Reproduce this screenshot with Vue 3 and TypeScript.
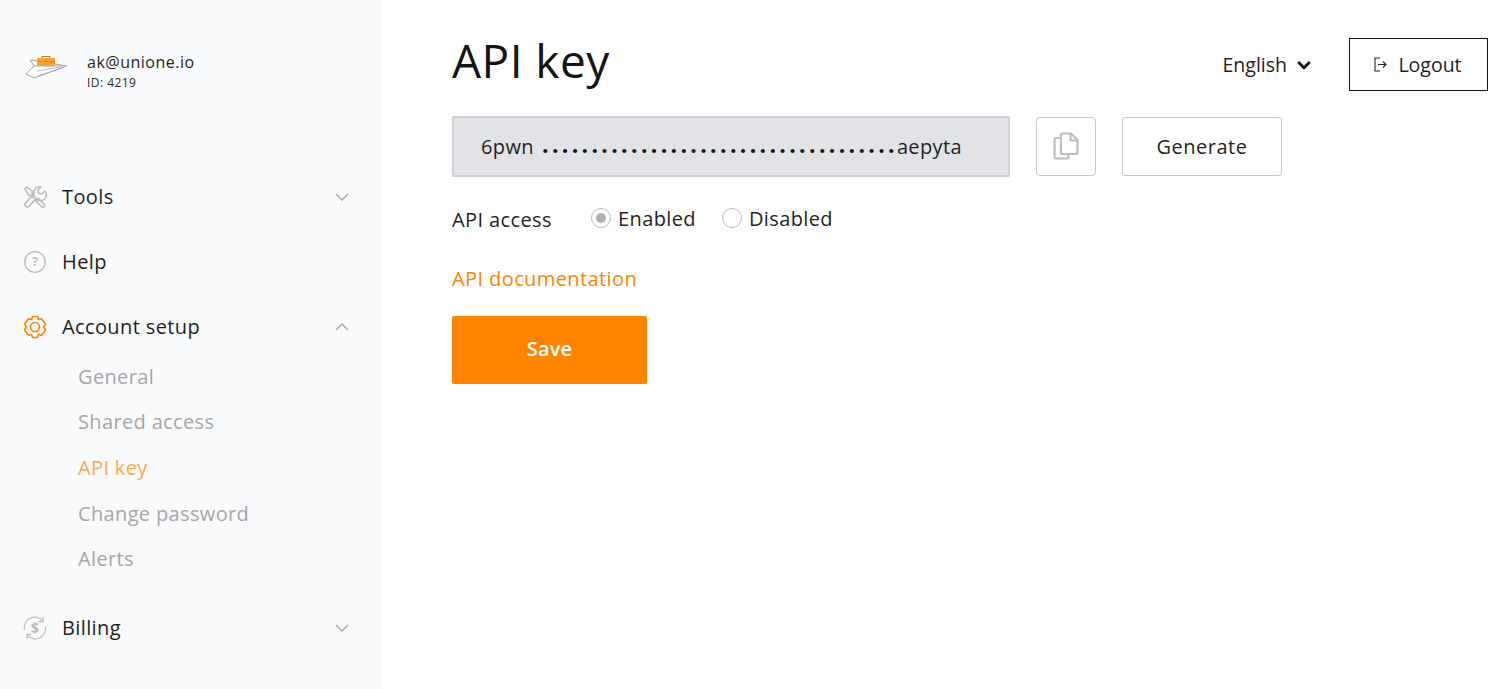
<script setup lang="ts">
interface SubItem { label: string; active?: boolean }
const subItems: SubItem[] = [
  { label: 'General' },
  { label: 'Shared access' },
  { label: 'API key', active: true },
  { label: 'Change password' },
  { label: 'Alerts' },
]
const dots = '.'.repeat(36)
</script>

<template>
  <div class="page">
    <aside class="sidebar">
      <div class="user">
        <svg class="logo" width="44" height="28" viewBox="25 52 44 28" fill="none">
          <path d="M30 60 L67 66 L37 71 L34 66 Z" fill="#fff" stroke="#8d8d8d" stroke-width=".8" stroke-linejoin="round" />
          <path d="M34 66 L67 66 L34 78 L26 74 Z" fill="#fff" stroke="#8d8d8d" stroke-width=".8" stroke-linejoin="round" />
          <path d="M37 71 L67 66 L38 76" stroke="#a5a5a5" stroke-width=".7" />
          <path d="M40 66.500 H67" stroke="#cfd8e8" stroke-width="1.200" />
          <rect x="37" y="58" width="18" height="8" rx="1" fill="#f9a22f" />
          <path d="M42 58 V56.500 H50 V58" stroke="#b9762a" stroke-width="1" />
          <path d="M37 61.500 H55" stroke="#d98a22" stroke-width=".7" />
        </svg>
        <div class="user-text">
          <div class="email">ak@unione.io</div>
          <div class="uid">ID: 4219</div>
        </div>
      </div>

      <nav class="nav">
        <div class="item">
          <svg class="icon" viewBox="0 0 24 24" fill="none" stroke="#b8b8b8" stroke-width="1.500" stroke-linejoin="round" stroke-linecap="round">
            <path d="M2 4 L4 2 L9 6 L9 8.500 L12 11.500 L10.500 13 L7.500 10 L5.500 10 Z" />
            <path d="M15 13 L21.500 19.500 A1.800 1.800 0 0 1 19 22 L12.500 15.500" />
            <path d="M22 6 L18.500 9 L15.500 8 L15 5 L18 2 A5.500 5.500 0 0 0 11 8.500 L2.500 18 A2.500 2.500 0 0 0 6 21.500 L13 13.500 A5.500 5.500 0 0 0 22 6 Z" />
          </svg>
          <span class="label">Tools</span>
          <svg class="chev" viewBox="0 0 14 8" fill="none" stroke="#a9a9a9" stroke-width="1.500"><path d="M1 1 L7 7 L13 1" /></svg>
        </div>
        <div class="item">
          <svg class="icon" viewBox="0 0 24 24" fill="none">
            <circle cx="12" cy="12" r="10.300" stroke="#bdbdbd" stroke-width="1.300" />
            <text x="12" y="16.200" text-anchor="middle" class="qmark">?</text>
          </svg>
          <span class="label">Help</span>
        </div>
        <div class="item">
          <svg class="icon" viewBox="0 0 24 24" fill="none" stroke="#ff8500" stroke-width="1.600" stroke-linejoin="round">
            <path d="M9.500 1.500 H14.500 L15.500 4.500 L18.500 3.800 L22.500 9 L20.700 12 L22.500 15 L18.500 20.200 L15.500 19.500 L14.500 22.500 H9.500 L8.500 19.500 L5.500 20.200 L1.500 15 L3.300 12 L1.500 9 L5.500 3.800 L8.500 4.500 Z" />
            <circle cx="12" cy="12" r="4.500" />
          </svg>
          <span class="label">Account setup</span>
          <svg class="chev" viewBox="0 0 14 8" fill="none" stroke="#a9a9a9" stroke-width="1.500"><path d="M1 7 L7 1 L13 7" /></svg>
        </div>
        <ul class="sub">
          <li v-for="s in subItems" :key="s.label" :class="{ active: s.active }">{{ s.label }}</li>
        </ul>
        <div class="item billing">
          <svg class="icon" viewBox="0 0 24 24" fill="none" stroke="#bdbdbd" stroke-width="1.300">
            <path d="M1.500 13.500 A10.500 10.500 0 0 1 19.500 4.500 M22.500 10.500 A10.500 10.500 0 0 1 4.500 19.500" />
            <path d="M20 1 V5.500 H15.500 M4 23 V18.500 H8.500" />
            <text x="12" y="17" text-anchor="middle" class="dollar">$</text>
          </svg>
          <span class="label">Billing</span>
          <svg class="chev" viewBox="0 0 14 8" fill="none" stroke="#a9a9a9" stroke-width="1.500"><path d="M1 1 L7 7 L13 1" /></svg>
        </div>
      </nav>
    </aside>

    <main class="main">
      <header class="header">
        <h1 class="title">API key</h1>
        <div class="lang">
          <span>English</span>
          <svg width="14" height="10" viewBox="0 0 14 10" fill="none" stroke="#111" stroke-width="2.800"><path d="M1.200 2 L7 7.800 L12.800 2" /></svg>
        </div>
        <button class="logout">
          <svg width="15" height="15" viewBox="0 0 15 15" fill="none" stroke="#222" stroke-width="1.100">
            <path d="M7 1 H2 V14 H7" />
            <path d="M5 7.500 H13 M10 4.500 L13 7.500 L10 10.500" />
          </svg>
          <span>Logout</span>
        </button>
      </header>

      <div class="key-row">
        <div class="key">
          <span class="key-a">6pwn</span>
          <span class="key-dots">{{ dots }}</span>
          <span class="key-b">aepyta</span>
        </div>
        <button class="copy" aria-label="Copy">
          <svg width="26" height="30" viewBox="0 0 26 30" fill="none" stroke="#bdbdbd" stroke-width="2.200" stroke-linejoin="round">
            <path d="M8 6 H3 A1.500 1.500 0 0 0 1.500 7.500 V25 A1.500 1.500 0 0 0 3 26.500 H14 A1.500 1.500 0 0 0 15.500 25 V22" />
            <path d="M8 3 A1.500 1.500 0 0 1 9.500 1.500 H18 L24.500 8 V20.500 A1.500 1.500 0 0 1 23 22 H9.500 A1.500 1.500 0 0 1 8 20.500 Z" />
            <path d="M17.500 1.500 V8.500 H24.500" />
          </svg>
        </button>
        <button class="generate">Generate</button>
      </div>

      <div class="access">
        <span class="access-label">API access</span>
        <label class="radio"><span class="dot on"></span>Enabled</label>
        <label class="radio"><span class="dot"></span>Disabled</label>
      </div>

      <a class="doc">API documentation</a>

      <button class="save">Save</button>
    </main>
  </div>
</template>

<style>
html, body { background: #fff; }
</style>

<style scoped>
.page {
  display: flex;
  height: 689px;
  overflow: hidden;
  font-family: "Open Sans", sans-serif;
  color: #1a1a1a;
}
.sidebar {
  width: 381px;
  flex: none;
  background: #f9fafc;
  box-sizing: border-box;
  padding: 50px 30px 0 23px;
}
.user {
  display: flex;
  align-items: flex-start;
  gap: 18px;
  height: 40px;
  padding-left: 2px;
}
.logo { flex: none; margin-top: 2px; }
.user-text { margin-top: 1px; }
.email { font-size: 16px; line-height: 22px; letter-spacing: .5px; color: #1f1f1f; }
.uid { font-size: 12px; line-height: 16px; letter-spacing: .45px; margin-top: 2px; color: #2a2a2a; }
.nav { margin-top: 85px; }
.item {
  display: flex;
  align-items: center;
  height: 44px;
  margin-bottom: 21px;
}
.icon { width: 24px; height: 24px; flex: none; }
.label {
  margin: 0 0 2px 15px;
  font-size: 20px;
  letter-spacing: .38px;
  flex: 1;
  color: #1f1f1f;
}
.chev { width: 14px; height: 8px; flex: none; margin-right: 2px; }
.qmark { font: 700 12px "Open Sans", sans-serif; fill: #bdbdbd; stroke: none; }
.dollar { font: 700 14px "Open Sans", sans-serif; fill: #bdbdbd; stroke: none; }
.sub {
  list-style: none;
  margin: -16.150px 0 0 0;
  padding: 0 0 0 55px;
}
.sub li {
  height: 45.600px;
  line-height: 45.600px;
  font-size: 20px;
  letter-spacing: .35px;
  color: #a6a6a6;
}
.sub li.active { color: #ffa94d; }
.billing { margin-top: 24.650px; }
.main {
  flex: 1;
  min-width: 0;
  padding: 0 19px 0 71px;
}
.header {
  display: flex;
  align-items: center;
  height: 116px;
}
.title {
  margin: 4px auto 0 0;
  font-size: 46px;
  font-weight: 400;
  letter-spacing: .45px;
  line-height: 60px;
  color: #141414;
}
.lang {
  display: flex;
  align-items: center;
  gap: 10px;
  font-size: 19.500px;
  margin-right: 38px;
  margin-top: 13px;
  color: #1f1f1f;
}
.logout {
  display: flex;
  align-items: center;
  justify-content: center;
  gap: 10px;
  width: 139px;
  height: 53px;
  margin-top: 13px;
  background: #fff;
  border: 1px solid #111;
  font: 400 19.500px "Open Sans", sans-serif;
  color: #1f1f1f;
  padding: 0 2px 0 0;
}
.key-row { display: flex; align-items: center; height: 61px; }
.key {
  width: 558px;
  height: 61px;
  box-sizing: border-box;
  background: #e1e3e7;
  border: 2px solid #cdcfd2;
  border-radius: 2px;
  display: flex;
  align-items: center;
  padding: 0 46px 0 27px;
  font-size: 20px;
  letter-spacing: .38px;
  color: #1f1f1f;
  white-space: nowrap;
}
.key-a { flex: none; width: 54px; }
.key-dots {
  flex: none;
  margin: 0 -3.300px 6px 7px;
  font-size: 23px;
  letter-spacing: 3.330px;
  font-weight: 700;
  color: #111;
}
.key-b { flex: 1; min-width: 0; display: flex; justify-content: flex-end; }
.copy {
  width: 60px;
  height: 59px;
  margin-left: 26px;
  background: #fff;
  border: 1px solid #c8c8c8;
  border-radius: 4px;
  display: flex;
  align-items: center;
  justify-content: center;
  padding: 0;
}
.generate {
  width: 160px;
  height: 59px;
  margin-left: 26px;
  background: #fff;
  border: 1px solid #c8c8c8;
  border-radius: 3px;
  font: 400 20px "Open Sans", sans-serif;
  letter-spacing: .5px;
  color: #1f1f1f;
  padding: 0;
}
.access {
  display: flex;
  align-items: center;
  margin-top: 26px;
  height: 30px;
  font-size: 20px;
  letter-spacing: .38px;
  color: #1f1f1f;
}
.access-label { width: 139px; margin-top: 2px; }
.radio { display: flex; align-items: center; gap: 7px; margin-right: 26px; }
.dot {
  width: 20px;
  height: 20px;
  box-sizing: border-box;
  border-radius: 50%;
  border: 1px solid #bbb;
  background: #fff;
  display: block;
  position: relative;
}
.dot.on::after {
  content: "";
  position: absolute;
  inset: 4px;
  border-radius: 50%;
  background: #b0b0b0;
}
.doc {
  display: block;
  margin-top: 31px;
  height: 30px;
  line-height: 30px;
  font-size: 20px;
  letter-spacing: .4px;
  color: #ff8500;
}
.save {
  display: block;
  margin-top: 22px;
  width: 195px;
  height: 68px;
  border: none;
  border-radius: 2px;
  background: #ff8500;
  color: #fff;
  font: 600 20px "Open Sans", sans-serif;
  letter-spacing: .2px;
  padding: 0 0 4px;
}
</style>
